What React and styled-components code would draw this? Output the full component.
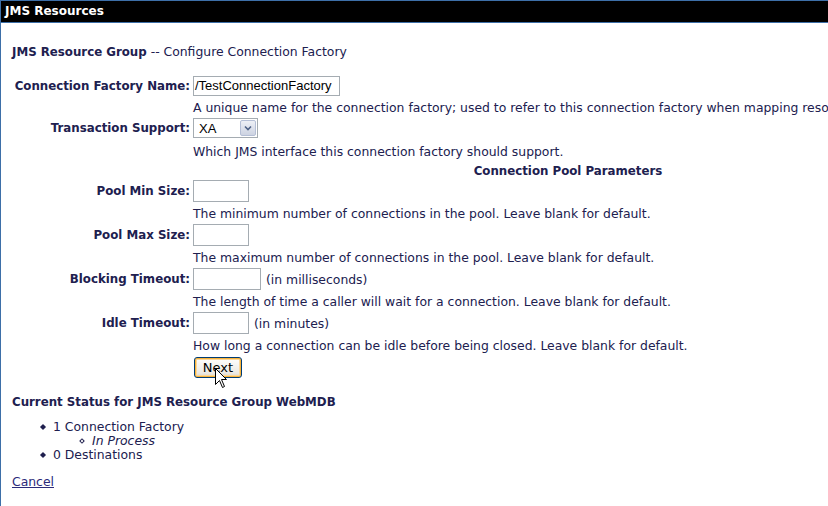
import React from 'react'
import styled, { createGlobalStyle } from 'styled-components'

const GlobalStyle = createGlobalStyle`
  body {
    margin: 0;
    background: #fff;
    overflow: hidden;
    font-family: "DejaVu Sans", Verdana, sans-serif;
    color: #20204f;
  }
`

const Panel = styled.section`
  width: 1300px;
  min-height: 520px;
  border: 1px solid #3d6fa8;
  border-right: none;
  box-sizing: border-box;
`

const Header = styled.div`
  height: 21px;
  line-height: 21px;
  background: #000;
  color: #fff;
  font-weight: bold;
  font-size: 12px;
  padding-left: 4px;
  border-bottom: 1px solid #3d6fa8;
`

const Content = styled.div`
  padding-left: 11px;
  font-size: 12.4px;

  b {
    font-weight: bold;
    font-size: 11.8px;
  }
`

const Title = styled.div`
  margin-top: 21px;
  line-height: 16px;
`

const Form = styled.div`
  display: flex;
  flex-direction: column;
  width: 1112px;
  margin-top: 15px;
`

const Row = styled.div`
  display: grid;
  grid-template-columns: 178px auto;
  column-gap: 3px;
  align-items: center;
  height: ${p => p.$h || 22}px;
`

const Label = styled.div`
  font-weight: bold;
  font-size: 11.8px;
  text-align: right;
  white-space: nowrap;
`

const Control = styled.div`
  display: flex;
  align-items: center;
  gap: 5px;
  white-space: nowrap;
`

const Desc = styled.div`
  white-space: nowrap;
  grid-column: 2;
`

const SectionHeading = styled.div`
  height: ${p => p.$h}px;
  line-height: ${p => p.$h}px;
  text-align: center;
  font-weight: bold;
  font-size: 11.8px;
`

const TextInput = styled.div`
  box-sizing: border-box;
  width: ${p => p.$w}px;
  height: ${p => p.$h || 22}px;
  border: 1px solid #a5acb2;
  background: #fff;
  font-family: "Liberation Sans", Arial, sans-serif;
  font-size: 13px;
  line-height: ${p => (p.$h || 22) - 2}px;
  padding-left: 1px;
  color: #000;
`

const SelectBox = styled.div`
  box-sizing: border-box;
  width: 65px;
  height: 20px;
  border: 1px solid #a5acb2;
  display: flex;
  align-items: center;
  justify-content: space-between;
  padding: 0 1px 0 5px;
  font-family: "Liberation Sans", Arial, sans-serif;
  font-size: 13px;
  color: #000;
`

const SelectButton = styled.div`
  width: 16px;
  height: 16px;
  box-sizing: border-box;
  border: 1px solid #b5bfd6;
  border-radius: 2px;
  background: linear-gradient(#eef0f6, #cdd3e2);
  display: flex;
  align-items: center;
  justify-content: center;
`

const ButtonWrap = styled.div`
  position: relative;
  width: fit-content;
`

const Button = styled.button`
  box-sizing: border-box;
  width: 48px;
  height: 21px;
  margin-left: 1px;
  padding: 0;
  border: 1px solid #003c74;
  border-radius: 3px;
  box-shadow: inset 0 0 0 1px #f8b33a, inset 0 0 0 2px #fcd89a;
  background: linear-gradient(#ffffff, #ece9e2 80%, #d6d0c5);
  font-family: "DejaVu Sans", Verdana, sans-serif;
  font-size: 13px;
  color: #000;
`

const Pointer = styled.svg`
  position: absolute;
  left: 22px;
  top: 11px;
`

const StatusTitle = styled.div`
  margin-top: 16px;
  line-height: 16px;
  font-weight: bold;
  font-size: 11.8px;
`

const List = styled.ul`
  list-style: none;
  margin: 10px 0 0;
  padding: 0 0 0 29px;
`

const Item = styled.li`
  position: relative;
  line-height: 14px;
  padding-left: 12px;

  &::before {
    content: '';
    position: absolute;
    left: 0;
    top: 5px;
    width: 4px;
    height: 4px;
    transform: rotate(45deg);
    background: ${p => (p.$sub ? '#fff' : '#20204f')};
    border: 1px solid #20204f;
    box-sizing: border-box;
  }
`

const SubList = styled.ul`
  list-style: none;
  margin: 0;
  padding: 0 0 0 27px;

  li {
    font-style: italic;
  }
`

const CancelLink = styled.a`
  display: inline-block;
  margin-top: 12px;
  color: #2b2b7a;
  text-decoration: underline;
  line-height: 16px;
`

const Field = ({ label, children, h }) => (
  <Row $h={h}>
    <Label>{label}</Label>
    <Control>{children}</Control>
  </Row>
)

const Help = ({ children, h }) => (
  <Row $h={h}>
    <span />
    <Desc>{children}</Desc>
  </Row>
)

export default function App() {
  return (
    <>
      <GlobalStyle />
      <Panel>
        <Header>JMS Resources</Header>
        <Content>
          <Title>
            <b>JMS Resource Group</b> -- Configure Connection Factory
          </Title>
          <Form>
            <Field label="Connection Factory Name:">
              <TextInput $w={147} $h={20}>/TestConnectionFactory</TextInput>
            </Field>
            <Help h={20}>
              A unique name for the connection factory; used to refer to this connection factory when mapping resource references.
            </Help>
            <Field label="Transaction Support:">
              <SelectBox>
                XA
                <SelectButton>
                  <svg width="8" height="6" viewBox="0 0 8 6">
                    <path d="M1 1.5 L4 4.5 L7 1.5" fill="none" stroke="#4d6185" strokeWidth="1.6" />
                  </svg>
                </SelectButton>
              </SelectBox>
            </Field>
            <Help h={24}>Which JMS interface this connection factory should support.</Help>
            <SectionHeading $h={17}>Connection Pool Parameters</SectionHeading>
            <Field label="Pool Min Size:">
              <TextInput $w={56} />
            </Field>
            <Help>The minimum number of connections in the pool. Leave blank for default.</Help>
            <Field label="Pool Max Size:">
              <TextInput $w={56} />
            </Field>
            <Help>The maximum number of connections in the pool. Leave blank for default.</Help>
            <Field label="Blocking Timeout:">
              <TextInput $w={68} />
              (in milliseconds)
            </Field>
            <Help>The length of time a caller will wait for a connection. Leave blank for default.</Help>
            <Field label="Idle Timeout:">
              <TextInput $w={56} />
              (in minutes)
            </Field>
            <Help>How long a connection can be idle before being closed. Leave blank for default.</Help>
            <Field>
              <ButtonWrap>
                <Button>Next</Button>
                <Pointer width="13" height="21" viewBox="0 0 13 21">
                  <path
                    d="M0.5 0.5 L0.5 16.5 L4.5 12.5 L7.5 19.5 L9.5 18.5 L6.5 11.5 L11.5 11.5 Z"
                    fill="#fff"
                    stroke="#000"
                    strokeWidth="1"
                  />
                </Pointer>
              </ButtonWrap>
            </Field>
          </Form>
          <StatusTitle>Current Status for JMS Resource Group WebMDB</StatusTitle>
          <List>
            <Item>
              1 Connection Factory
              <SubList>
                <Item $sub>In Process</Item>
              </SubList>
            </Item>
            <Item>0 Destinations</Item>
          </List>
          <CancelLink href="#">Cancel</CancelLink>
        </Content>
      </Panel>
    </>
  )
}
